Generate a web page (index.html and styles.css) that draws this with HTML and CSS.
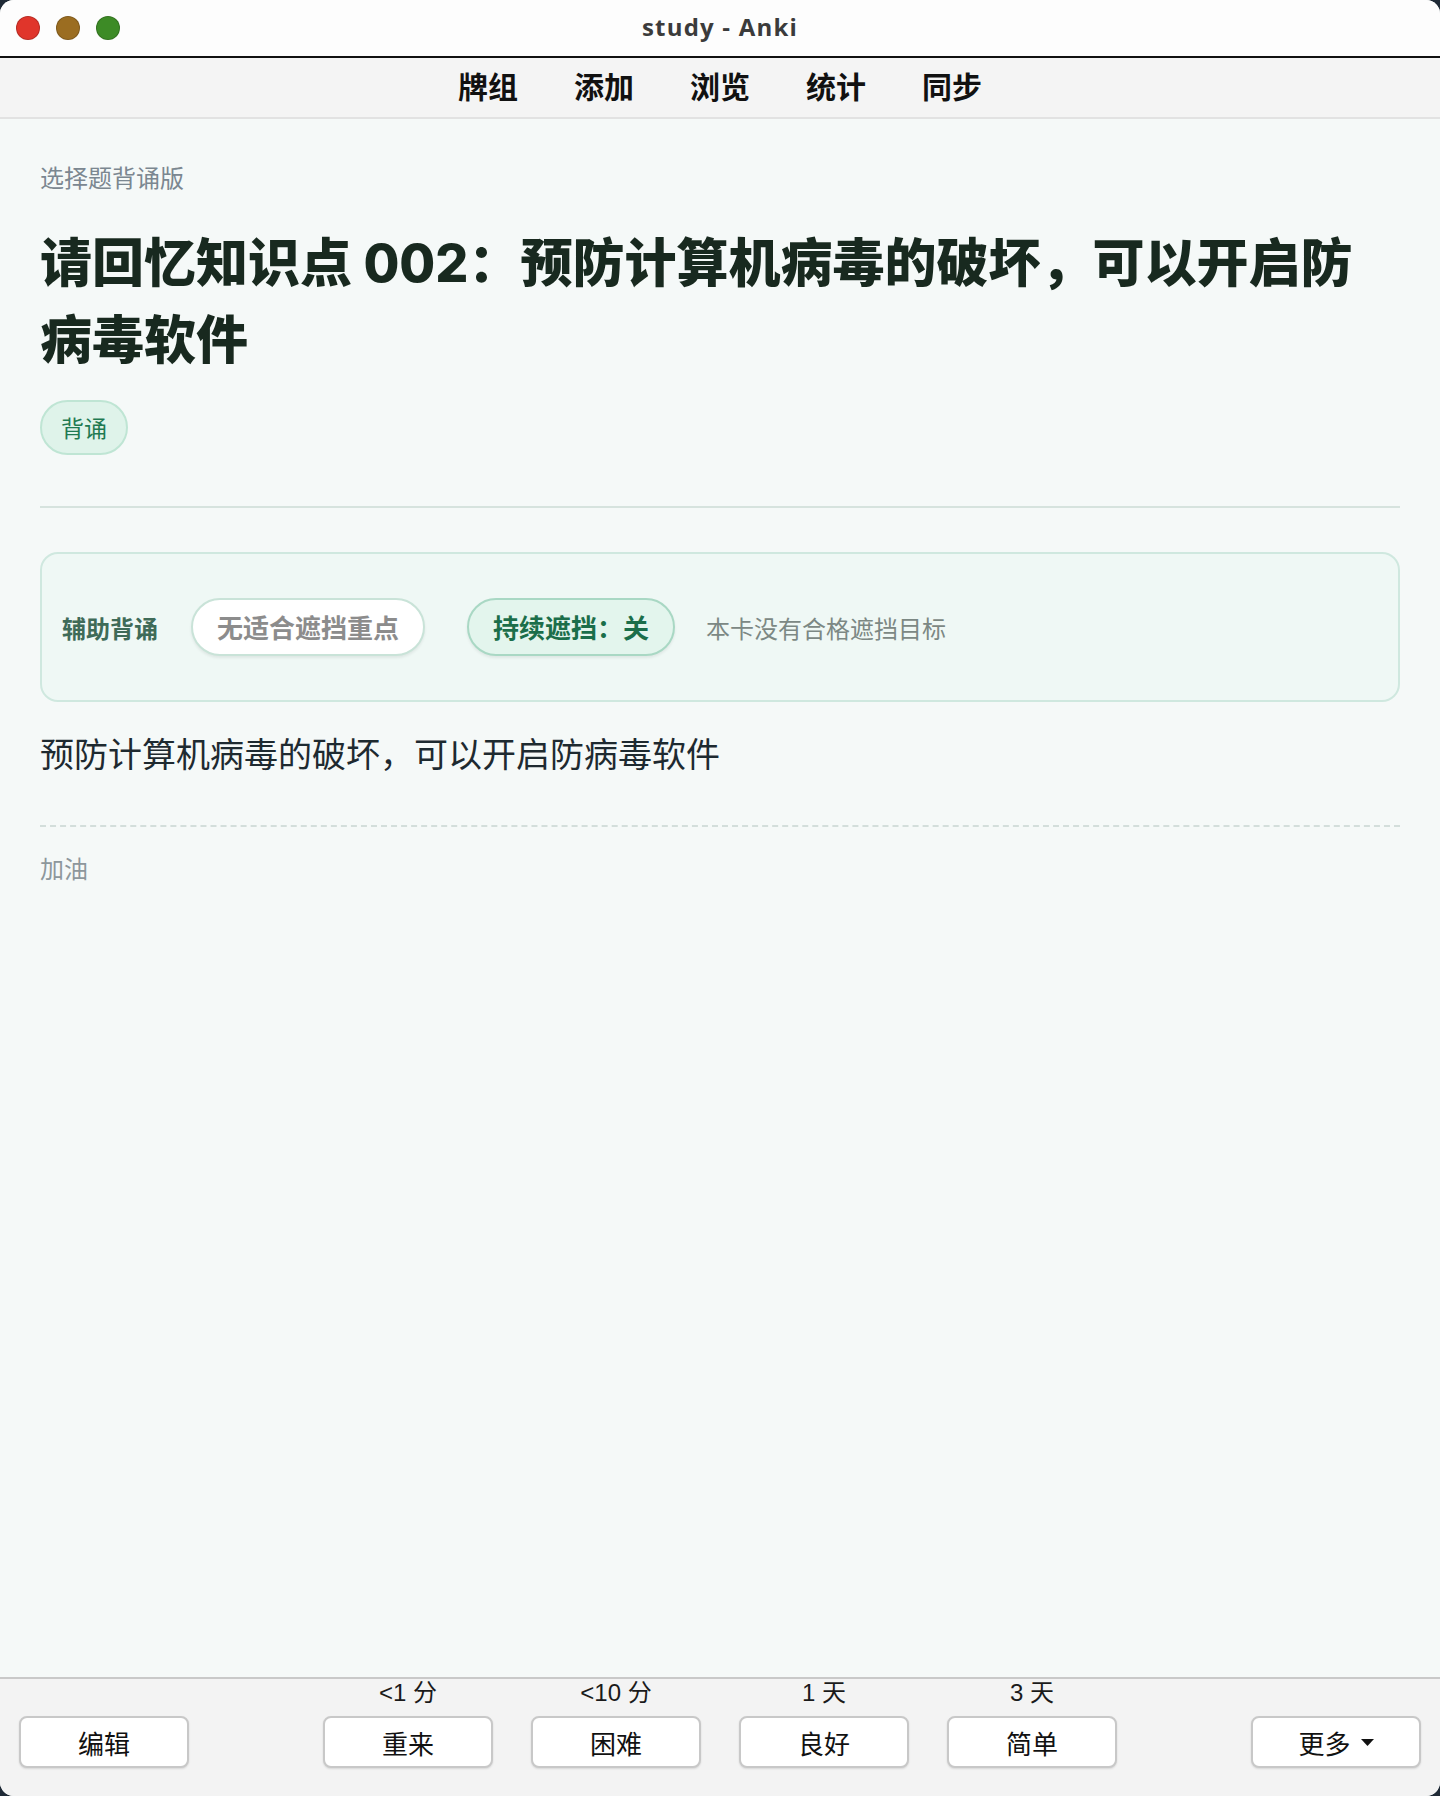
FILE: index.html
```html
<!DOCTYPE html>
<html lang="zh-CN">
<head>
    <meta charset="UTF-8">
    <meta name="viewport" content="width=device-width, initial-scale=1.0">
    <title>study - Anki</title>
    <link rel="stylesheet" href="styles.css">
</head>
<body>
    <div class="window">
        <header class="titlebar">
            <div class="lights">
                <span class="light red"></span>
                <span class="light yellow"></span>
                <span class="light green"></span>
            </div>
            <div class="window-title">study - Anki</div>
            <div></div>
        </header>

        <nav class="toolbar">
            <a href="#">牌组</a>
            <a href="#">添加</a>
            <a href="#">浏览</a>
            <a href="#">统计</a>
            <a href="#">同步</a>
        </nav>

        <main class="reviewer">
            <div class="deck-type">选择题背诵版</div>
            <h1 class="question">请回忆知识点 002：预防计算机病毒的破坏，可以开启防病毒软件</h1>
            <div class="tags">
                <span class="tag">背诵</span>
            </div>

            <hr class="divider">

            <div class="assist">
                <span class="assist-label">辅助背诵</span>
                <button class="pill pill-disabled">无适合遮挡重点</button>
                <button class="pill pill-toggle">持续遮挡：关</button>
                <span class="assist-hint">本卡没有合格遮挡目标</span>
            </div>

            <div class="answer">预防计算机病毒的破坏，可以开启防病毒软件</div>

            <hr class="dashed">

            <div class="note">加油</div>
        </main>

        <footer class="answer-bar">
            <div class="bar-side">
                <button class="btn">编辑</button>
            </div>
            <div class="ease-group">
                <div class="ease">
                    <span class="due">&lt;1 分</span>
                    <button class="btn">重来</button>
                </div>
                <div class="ease">
                    <span class="due">&lt;10 分</span>
                    <button class="btn">困难</button>
                </div>
                <div class="ease">
                    <span class="due">1 天</span>
                    <button class="btn">良好</button>
                </div>
                <div class="ease">
                    <span class="due">3 天</span>
                    <button class="btn">简单</button>
                </div>
            </div>
            <div class="bar-side bar-right">
                <button class="btn btn-more">更多
                    <svg class="caret" width="13" height="7" viewBox="0 0 13 7"><polygon points="0,0 13,0 6.5,7" fill="#111"/></svg>
                </button>
            </div>
        </footer>
    </div>
</body>
</html>
```

FILE: styles.css
```css
* {
    box-sizing: border-box;
}

body {
    margin: 0;
    background-color: #1f2a36;
    font-family: "Noto Sans CJK SC", sans-serif;
}

.window {
    width: 1440px;
    height: 1796px;
    display: flex;
    flex-direction: column;
    border-radius: 14px;
    overflow: hidden;
    background-color: #f5f9f8;
}

/* title bar */
.titlebar {
    height: 58px;
    display: grid;
    grid-template-columns: 1fr auto 1fr;
    align-items: center;
    background-color: #fdfdfd;
    border-bottom: 2px solid #111;
}

.lights {
    display: flex;
    gap: 16px;
    padding-left: 16px;
}

.light {
    width: 24px;
    height: 24px;
    border-radius: 50%;
    border: 1px solid rgba(0, 0, 0, 0.18);
}

.red {
    background-color: #e0352b;
}

.yellow {
    background-color: #9b6d21;
}

.green {
    background-color: #3d8b26;
}

.window-title {
    padding-bottom: 4px;
    font-family: "Open Sans", sans-serif;
    font-weight: 700;
    font-size: 24px;
    letter-spacing: 1.2px;
    color: #3b3b3b;
}

/* toolbar */
.toolbar {
    height: 61px;
    padding-bottom: 5px;
    display: flex;
    justify-content: center;
    align-items: center;
    gap: 56px;
    background-color: #f4f4f4;
    border-bottom: 2px solid #e2e2e2;
}

.toolbar a {
    font-size: 30px;
    font-weight: 700;
    color: #111;
    text-decoration: none;
}

/* card */
.reviewer {
    flex: 1;
    padding: 40px 40px 0;
}

.deck-type {
    font-size: 24px;
    line-height: 36px;
    color: #7b8790;
}

.question {
    margin: 30px 0 0;
    max-width: 1340px;
    font-family: "Inter", "Noto Sans CJK SC", sans-serif;
    font-size: 52px;
    line-height: 77px;
    font-weight: 800;
    color: #18291f;
}

.tags {
    display: flex;
    margin-top: 21px;
}

.tag {
    height: 55px;
    line-height: 51px;
    padding: 0 19px;
    font-size: 23px;
    color: #1f7a52;
    background-color: #dff3ea;
    border: 2px solid #bfe5d4;
    border-radius: 28px;
}

.divider {
    margin: 51px 0 0;
    border: none;
    border-top: 2px solid #d6e3de;
}

.assist {
    margin-top: 44px;
    display: flex;
    align-items: center;
    gap: 33px;
    padding: 44px 20px;
    background-color: #eff8f5;
    border: 2px solid #cfe8df;
    border-radius: 18px;
}

.assist-label {
    font-size: 24px;
    font-weight: 700;
    color: #3f6b58;
}

.pill {
    height: 58px;
    line-height: 54px;
    padding: 0 24px;
    font-family: inherit;
    font-size: 26px;
    font-weight: 700;
    border-radius: 29px;
    box-shadow: 0 2px 3px rgba(0, 0, 0, 0.07);
}

.pill-disabled {
    color: #8c8c8c;
    background-color: #fff;
    border: 2px solid #c9e3d8;
}

.pill-toggle {
    margin-left: 9px;
    color: #1b6e4a;
    background-color: #e3f5ed;
    border: 2px solid #a9d8c4;
}

.assist-hint {
    margin-left: -2px;
    font-size: 24px;
    color: #7c8884;
}

.answer {
    margin-top: 25px;
    font-size: 34px;
    line-height: 51px;
    color: #1e2a30;
}

.dashed {
    margin: 47px 0 0;
    border: none;
    border-top: 2px dashed #d3dedb;
}

.note {
    margin-top: 23px;
    font-size: 24px;
    line-height: 36px;
    color: #8d979c;
}

/* answer bar */
.answer-bar {
    display: grid;
    grid-template-columns: 1fr auto 1fr;
    align-items: end;
    padding: 0 19px 28px;
    background-color: #f3f3f3;
    border-top: 2px solid #c9c9c9;
}

.bar-right {
    display: flex;
    justify-content: flex-end;
}

.ease-group {
    display: flex;
    gap: 38px;
}

.ease {
    display: flex;
    flex-direction: column;
    align-items: center;
    gap: 9px;
}

.due {
    font-family: "Liberation Sans", "Noto Sans CJK SC", sans-serif;
    font-size: 24px;
    line-height: 28px;
    color: #1a1a1a;
}

.btn {
    width: 170px;
    height: 52px;
    display: flex;
    align-items: center;
    justify-content: center;
    font-family: "Noto Sans CJK SC", sans-serif;
    font-size: 26px;
    color: #111;
    background-color: #fff;
    border: 2px solid #c8c8c8;
    border-radius: 8px;
    box-shadow: 0 1px 2px rgba(0, 0, 0, 0.12);
}

.caret {
    margin-left: 10px;
}
```
